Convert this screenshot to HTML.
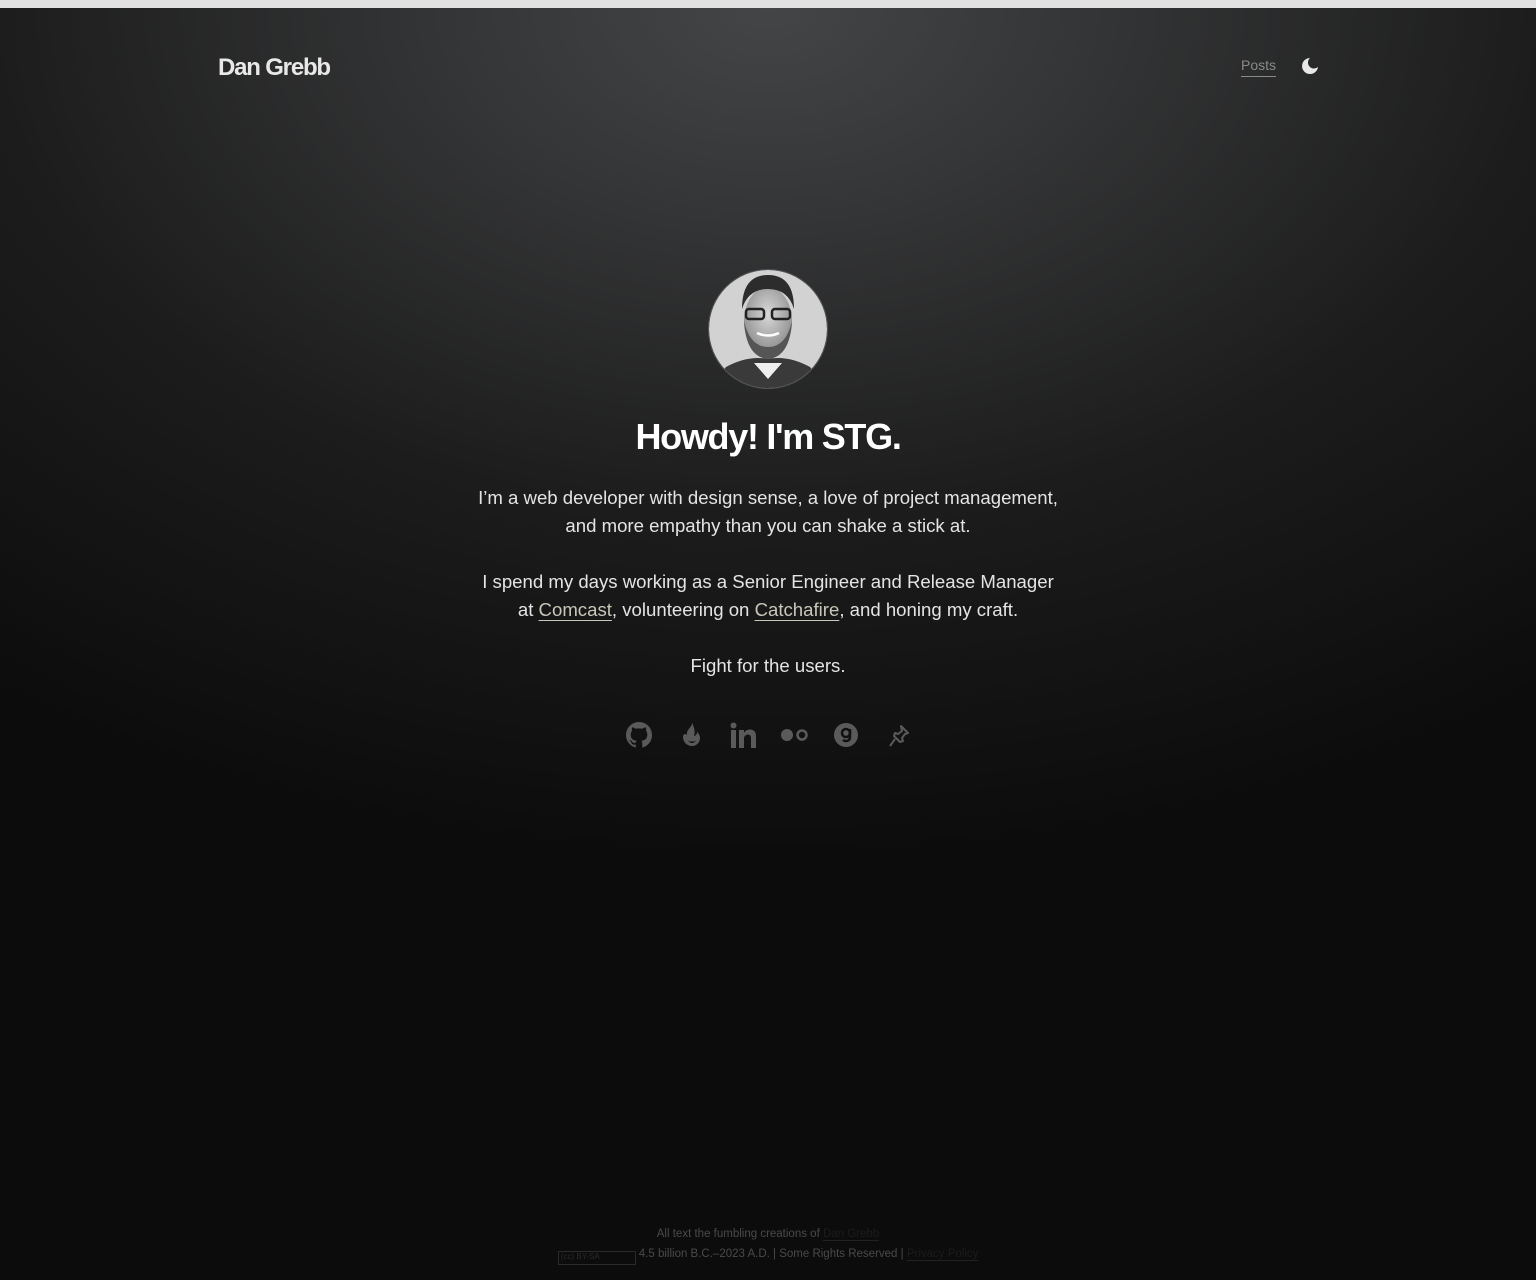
<!DOCTYPE html>
<html><head><meta charset="utf-8"><style>
html,body{margin:0;padding:0}
body{width:1536px;height:1280px;overflow:hidden;font-family:"Liberation Sans",sans-serif;
background:#0c0c0c;position:relative}
.top{position:absolute;top:0;left:0;right:0;height:8px;background:#e0e1e0}
.bg{position:absolute;top:8px;left:0;right:0;height:1272px;
background:radial-gradient(ellipse 1300px 850px at 768px 0px,#444547 0%,#343536 25%,#1c1c1c 60%,#0c0c0c 100%)}
.logo{position:absolute;left:218px;top:54px;font-size:24px;font-weight:bold;color:#e8e8e8;letter-spacing:-1.2px}
.posts{position:absolute;left:1241px;top:57px;font-size:14px;color:#8a8a8a;border-bottom:1px solid #8a8a8a;padding-bottom:3px}
.moon{position:absolute;left:1301px;top:57px}
.av{position:absolute;left:708px;top:269px}
h1{position:absolute;left:0;right:0;top:416px;margin:0;text-align:center;font-size:36px;color:#fff;letter-spacing:-1.3px;line-height:42px}
.t{position:absolute;left:0;right:0;text-align:center;font-size:18.6px;line-height:28px;color:#e4e4e4;letter-spacing:0}
.t a{color:#c9c7b9;text-decoration:underline;text-underline-offset:4px}
.icons{position:absolute;top:722px;left:626px}
.icons svg{position:absolute}
.f{position:absolute;left:0;right:0;text-align:center;font-size:11.5px;color:#4a4a4a}
</style></head><body>
<div class="top"></div><div class="bg"></div>
<div class="logo">Dan Grebb</div>
<div class="posts">Posts</div>
<svg class="moon" width="18" height="18" viewBox="0 0 18 18"><path d="M9 1a8 8 0 1 0 8 9A6 6 0 0 1 9 1z" fill="#e8e8e8"/></svg>
<svg class="av" width="120" height="120" viewBox="0 0 120 120">
<defs><clipPath id="c"><circle cx="60" cy="60" r="59"/></clipPath>
<radialGradient id="fg" cx="0.5" cy="0.4" r="0.6"><stop offset="0" stop-color="#d8d8d8"/><stop offset="1" stop-color="#8a8a8a"/></radialGradient></defs>
<g clip-path="url(#c)">
<rect width="120" height="120" fill="#d2d2d2"/>
<path d="M0 120 L18 98 Q40 86 60 90 Q80 86 102 98 L120 120Z" fill="#3a3a3a"/>
<path d="M46 94 L60 110 L74 94Z" fill="#eee"/>
<ellipse cx="60" cy="52" rx="24" ry="34" fill="url(#fg)"/>
<path d="M36 52 Q38 88 60 90 Q82 88 84 52 Q78 78 60 78 Q42 78 36 52Z" fill="#555"/>
<path d="M34 40 Q34 6 60 6 Q86 6 86 40 Q80 20 60 20 Q40 20 34 40Z" fill="#2c2c2c"/>
<rect x="38" y="40" width="18" height="10" rx="3" fill="none" stroke="#222" stroke-width="2.5"/>
<rect x="64" y="40" width="18" height="10" rx="3" fill="none" stroke="#222" stroke-width="2.5"/>
<path d="M49 64 Q60 69 71 64" stroke="#fff" stroke-width="2.5" fill="none"/>
</g>
<circle cx="60" cy="60" r="59.5" fill="none" stroke="#555" stroke-width="1"/>
</svg>
<h1>Howdy! I'm STG.</h1>
<div class="t" style="top:484px">I’m a web developer with design sense, a love of project management,<br>and more empathy than you can shake a stick at.</div>
<div class="t" style="top:568px">I spend my days working as a Senior Engineer and Release Manager<br>at <a>Comcast</a>, volunteering on <a>Catchafire</a>, and honing my craft.</div>
<div class="t" style="top:652px">Fight for the users.</div>
<div class="icons">
<svg style="left:0;top:0" width="26" height="26" viewBox="0 0 16 16"><path fill="#5a5a5a" d="M8 0C3.58 0 0 3.58 0 8c0 3.540 2.290 6.530 5.470 7.590.4.07.55-.17.55-.38v-1.330c-2.230.48-2.700-1.070-2.700-1.070-.36-.92-.89-1.170-.89-1.170-.73-.5.05-.49.05-.49.81.06 1.230.83 1.230.83.72 1.230 1.880.87 2.340.67.07-.52.28-.87.51-1.070-1.780-.2-3.650-.89-3.650-3.950 0-.87.31-1.590.82-2.150-.08-.2-.36-1.020.08-2.120 0 0 .67-.21 2.200.82a7.600 7.600 0 0 1 4 0c1.530-1.040 2.200-.82 2.200-.82.44 1.100.16 1.920.08 2.120.51.56.82 1.270.82 2.150 0 3.070-1.870 3.750-3.650 3.950.29.25.54.73.54 1.480v2.200c0 .21.15.46.55.38A8 8 0 0 0 16 8c0-4.420-3.580-8-8-8z"/></svg>
<svg style="left:54px;top:0" width="22" height="28" viewBox="0 0 22 28"><path fill="#5a5a5a" d="M12 0C13 5 6 7 7 13 5 11 3 12 3 15c0 5 4 9 9 9s8-4 8-8c0-3-2-5-3-6 0 3-2 4-3 4 2-6-1-10-2-14zM8 18c1 2 3 2 4 1 1 1 3 1 4-1-1 4-7 4-8 0z"/></svg>
<svg style="left:103px;top:0" width="28" height="28" viewBox="0 0 28 28"><rect x="2" y="8" width="5" height="18" fill="#5a5a5a"/><circle cx="4.5" cy="3.5" r="3" fill="#5a5a5a"/><path fill="#5a5a5a" d="M10 8h5v3c1-2 3-3.5 6-3.5 4 0 6 2.5 6 7V26h-5V16c0-2-1-3.5-3-3.5s-4 1.5-4 4V26h-5z"/></svg>
<svg style="left:154px;top:5px" width="30" height="16" viewBox="0 0 30 16"><circle cx="7" cy="8" r="6" fill="#5a5a5a"/><circle cx="22" cy="8" r="4.5" fill="none" stroke="#5a5a5a" stroke-width="2.5"/></svg>
<svg style="left:208px;top:1px" width="24" height="24" viewBox="0 0 24 24"><circle cx="12" cy="12" r="12" fill="#5a5a5a"/><circle cx="12" cy="10" r="4" fill="none" stroke="#101010" stroke-width="2.5"/><path d="M16 6v8c0 4-4 5-7 3" fill="none" stroke="#101010" stroke-width="2.5"/></svg>
<svg style="left:262px;top:2px" width="22" height="24" viewBox="0 0 22 24"><path d="M13 2l7 7-3 1-3 4 1 3-3 1-6-6 1-3 3 1 4-3z M7 15L2 22" fill="none" stroke="#5a5a5a" stroke-width="2" stroke-linejoin="round"/></svg>
</div>
<div class="f" style="top:1228px">All text the fumbling creations of <span style="color:#1c1c1c;border-bottom:1px solid #222">Dan Grebb</span></div>
<div class="f" style="top:1248px"><span style="display:inline-block;width:76px;height:12px;border:1px solid #2a2a2a;vertical-align:-2px;font-size:8px;color:#2a2a2a;text-align:left">&nbsp;(cc) BY-SA</span> 4.5 billion B.C.–2023 A.D. | Some Rights Reserved | <span style="color:#1c1c1c;border-bottom:1px solid #222">Privacy Policy</span></div>
</body></html>
